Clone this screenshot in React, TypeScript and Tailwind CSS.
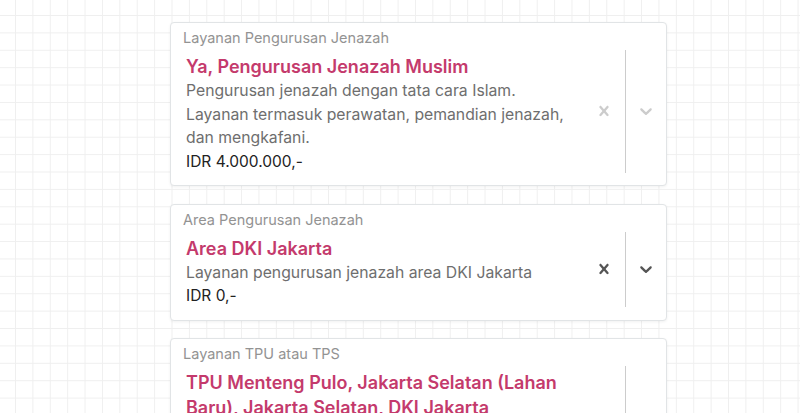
import React from "react";

type Option = {
  label: string;
  title: string;
  lines: string[];
  price?: string;
  active?: boolean;
};

const items: Option[] = [
  {
    label: "Layanan Pengurusan Jenazah",
    title: "Ya, Pengurusan Jenazah Muslim",
    lines: [
      "Pengurusan jenazah dengan tata cara Islam.",
      "Layanan termasuk perawatan, pemandian jenazah, dan mengkafani.",
    ],
    price: "IDR 4.000.000,-",
  },
  {
    label: "Area Pengurusan Jenazah",
    title: "Area DKI Jakarta",
    lines: ["Layanan pengurusan jenazah area DKI Jakarta"],
    price: "IDR 0,-",
    active: true,
  },
  {
    label: "Layanan TPU atau TPS",
    title: "TPU Menteng Pulo, Jakarta Selatan (Lahan Baru), Jakarta Selatan, DKI Jakarta",
    lines: [
      "Lahan makam baru di TPU Menteng Pulo, Jakarta Selatan.",
      "Termasuk biaya izin pemakaman dan penggalian liang lahat.",
    ],
    price: "IDR 2.500.000,-",
  },
];

function CrossIcon({ className }: { className: string }) {
  return (
    <svg viewBox="0 0 20 20" width="20" height="20" className={className} fill="currentColor">
      <path d="M14.348 14.849c-0.469 0.469-1.229 0.469-1.697 0l-2.651-3.030-2.651 3.029c-0.469 0.469-1.229 0.469-1.697 0-0.469-0.469-0.469-1.229 0-1.697l2.758-3.15-2.759-3.152c-0.469-0.469-0.469-1.228 0-1.697s1.228-0.469 1.697 0l2.652 3.031 2.651-3.031c0.469-0.469 1.228-0.469 1.697 0s0.469 1.229 0 1.697l-2.758 3.152 2.758 3.15c0.469 0.469 0.469 1.229 0 1.698z" />
    </svg>
  );
}

function ChevronIcon({ className }: { className: string }) {
  return (
    <svg viewBox="0 0 20 20" width="20" height="20" className={className} fill="currentColor">
      <path d="M4.516 7.548c0.436-0.446 1.043-0.481 1.576 0l3.908 3.747 3.908-3.747c0.533-0.481 1.141-0.446 1.574 0 0.436 0.445 0.408 1.197 0 1.615-0.406 0.418-4.695 4.502-4.695 4.502-0.217 0.223-0.502 0.335-0.787 0.335s-0.57-0.112-0.789-0.335c0 0-4.287-4.084-4.695-4.502s-0.436-1.17 0-1.615z" />
    </svg>
  );
}

function SelectCard({ item }: { item: Option }) {
  const iconColor = item.active ? "text-[#555555]" : "text-[#cccccc]";
  return (
    <div className="rounded-[4px] border border-[#e1e4e6] bg-white pt-[7px] pb-[8.5px] pl-[12px] pr-[2px] shadow-[0_1px_3px_rgba(0,0,0,0.06)]">
      <div className="text-[14.5px] leading-4 text-[#939393]">{item.label}</div>
      <div className="flex items-stretch">
        <div className="min-w-0 flex-1 px-[3px] pt-2 pb-[3px]">
          <div className="text-[18px] font-semibold leading-[25px] text-[#c43a6c]">{item.title}</div>
          <div className="text-[15.75px] leading-[23.5px] text-[#6e6e6e]">
            {item.lines.map((l) => (
              <div key={l}>{l}</div>
            ))}
          </div>
          {item.price && <div className="text-[15.5px] leading-6 text-[#222222]">{item.price}</div>}
        </div>
        <div className="flex items-center">
          <div className="flex w-9 justify-center">
            <CrossIcon className={iconColor} />
          </div>
        </div>
        <div className="ml-[3px] mr-[2px] my-1 w-px bg-[#cccccc]" />
        <div className="flex items-center">
          <div className="flex w-9 justify-center">
            <ChevronIcon className={iconColor} />
          </div>
        </div>
      </div>
    </div>
  );
}

export default function App() {
  return (
    <div
      className="h-[413px] overflow-hidden bg-white bg-[linear-gradient(to_right,#efefef_1px,transparent_1px),linear-gradient(to_bottom,#efefef_1px,transparent_1px)] bg-[size:17.4px_17.4px] bg-[position:15px_15px] pt-[22px] font-['Inter',sans-serif]"
    >
      <div className="ml-[170px] flex w-[497px] flex-col gap-[17.5px]">
        {items.map((it) => (
          <SelectCard key={it.label} item={it} />
        ))}
      </div>
    </div>
  );
}
